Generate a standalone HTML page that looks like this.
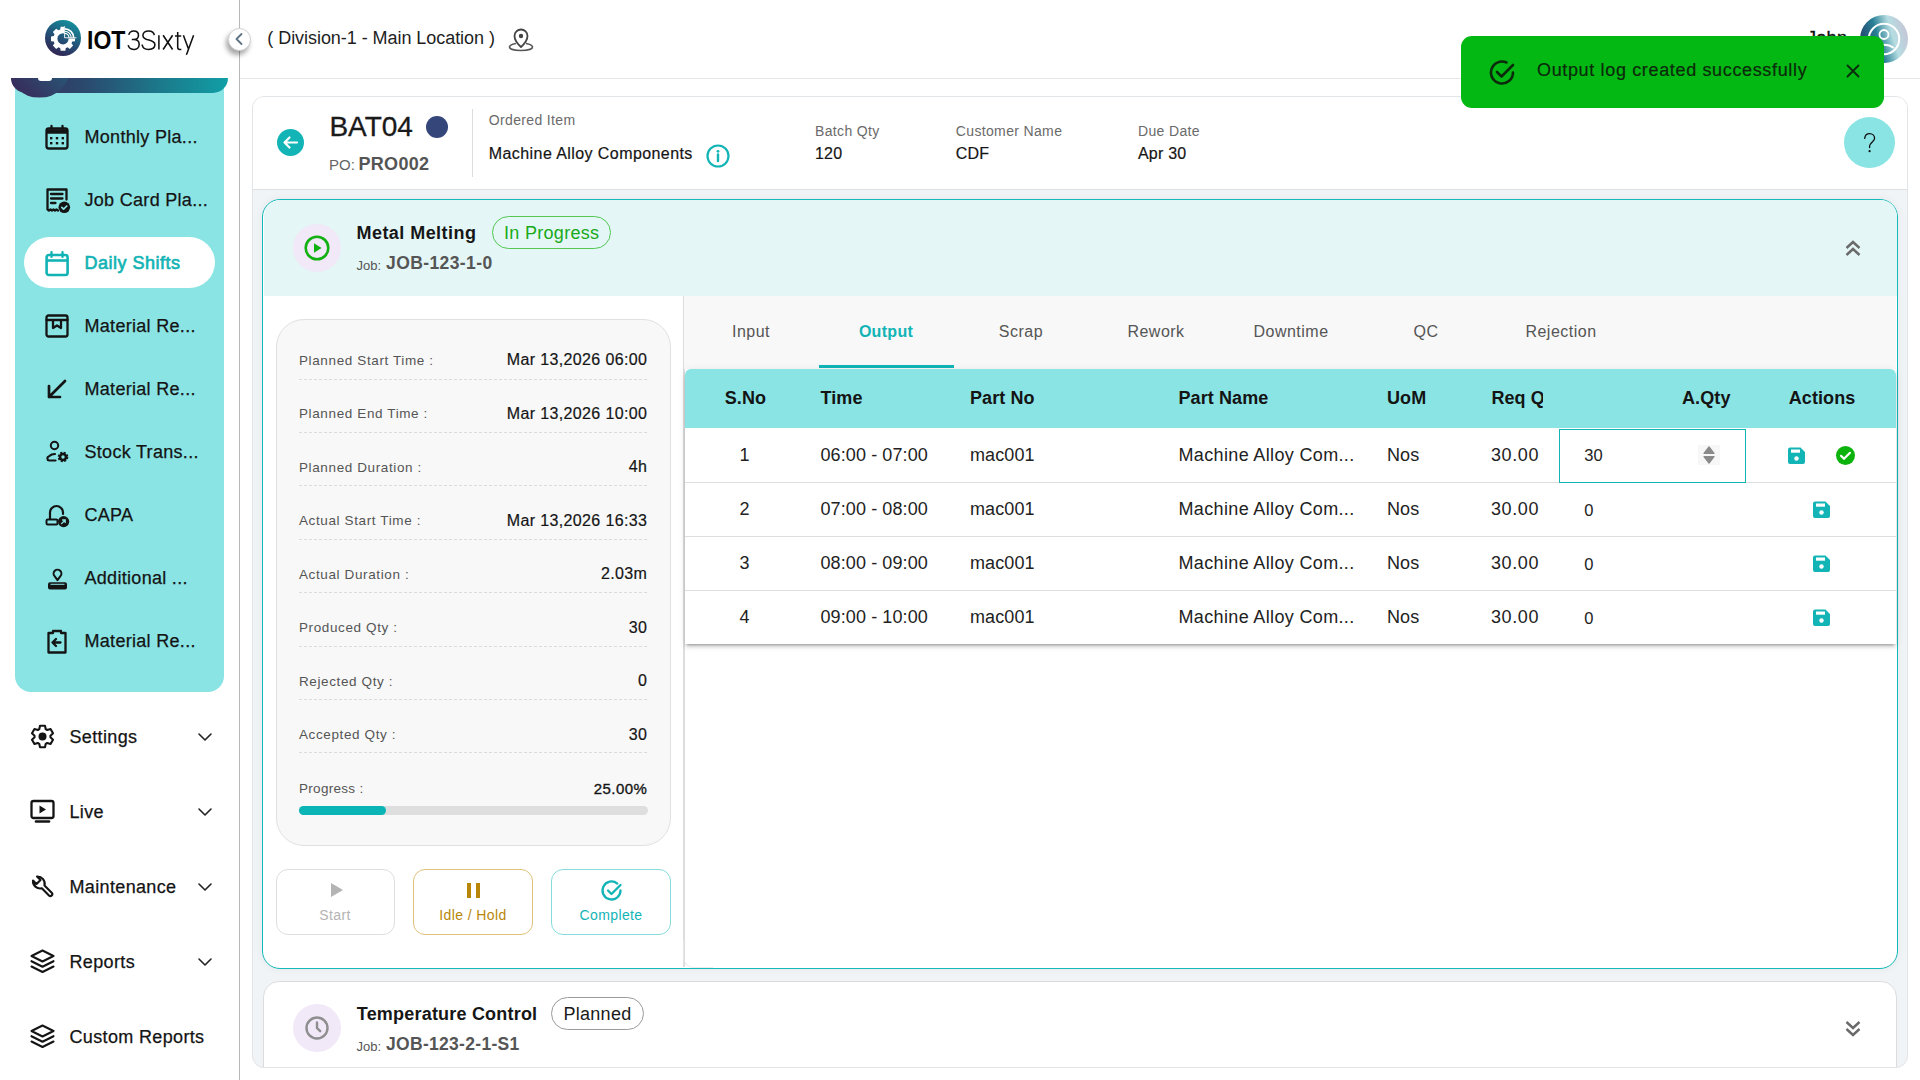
<!DOCTYPE html>
<html><head><meta charset="utf-8">
<style>
*{margin:0;padding:0;box-sizing:border-box}
html,body{width:1920px;height:1080px;overflow:hidden;background:#fff;font-family:"Liberation Sans",sans-serif;color:#111}
.a{position:absolute}
.t{position:absolute;line-height:1;white-space:nowrap}
svg{position:absolute;overflow:visible}
</style></head><body>
<div class="a" style="left:239px;top:0px;width:1px;height:1080px;background:#b8b8b8"></div>
<svg style="left:45px;top:20.2px" width="36" height="36" viewBox="0 0 36 36"><defs><linearGradient id="lg1" x1="0.25" y1="1" x2="0.75" y2="0"><stop offset="0" stop-color="#33204f"/><stop offset="0.5" stop-color="#22557a"/><stop offset="1" stop-color="#13959f"/></linearGradient>
<clipPath id="gq"><path d="M0 0H19V18.50H36V36H0Z"/></clipPath></defs>
<circle cx="18" cy="18" r="18" fill="url(#lg1)"/>
<path d="M26.90 22.40 L27.18 21.61 L29.98 21.13 L29.98 16.47 L27.18 15.99 L26.90 15.20 L26.84 15.05 L26.48 14.29 L28.11 11.98 L24.82 8.69 L22.51 10.32 L21.75 9.96 L21.60 9.90 L20.81 9.62 L20.33 6.82 L15.67 6.82 L15.19 9.62 L14.40 9.90 L14.25 9.96 L13.49 10.32 L11.18 8.69 L7.89 11.98 L9.52 14.29 L9.16 15.05 L9.10 15.20 L8.82 15.99 L6.02 16.47 L6.02 21.13 L8.82 21.61 L9.10 22.40 L9.16 22.55 L9.52 23.31 L7.89 25.62 L11.18 28.91 L13.49 27.28 L14.25 27.64 L14.40 27.70 L15.19 27.98 L15.67 30.78 L20.33 30.78 L20.81 27.98 L21.60 27.70 L21.75 27.64 L22.51 27.28 L24.82 28.91 L28.11 25.62 L26.48 23.31 L26.84 22.55 Z M23.60 18.80 A5.6 5.6 0 1 0 12.40 18.80 A5.6 5.6 0 1 0 23.60 18.80 Z" fill="#fff" fill-rule="evenodd" clip-path="url(#gq)"/>
<g fill="none" stroke="#fff">
<path d="M19.6 17.80V6.2M19.6 17.80H31.5" stroke-width="0.9"/>
<path d="M19.6 13.40A4.4 4.4 0 0 1 24 17.80" stroke-width="1.2"/>
<path d="M19.6 11.20A6.6 6.6 0 0 1 26.2 17.80" stroke-width="1.1"/>
<path d="M19.6 8.80A9 9 0 0 1 28.6 17.80" stroke-width="1.8"/>
</g></svg>
<div class="t" style="left:86.9px;top:27.49px;font-size:26px;font-weight:bold;color:#050505;transform:scaleX(0.885);transform-origin:0 0">IOT</div>
<svg style="left:0px;top:0px" width="200" height="60" viewBox="0 0 200 60"><g fill="none" stroke="#111" stroke-width="1.55" stroke-linecap="butt">
<path d="M128.8 34.8C129.4 32.2 131.3 30.9 133.7 30.9C136.7 30.9 138.5 32.7 138.5 35.2C138.5 37.7 136.6 39.5 133.6 39.5H131.8M133.6 39.5C137.1 39.5 139.2 41.5 139.2 44.4C139.2 47.5 136.8 49.4 133.6 49.4C130.7 49.4 128.7 47.9 128.2 45.2"/>
<path d="M154.3 35.2C153.9 32.5 151.6 30.9 148.6 30.9C145.3 30.9 142.9 32.7 142.9 35.4C142.9 41.6 154.9 38.6 154.9 44.6C154.9 47.6 152.3 49.4 148.7 49.4C144.9 49.4 142.4 47.5 142.1 44.5"/>
<path d="M158.9 35.3V49.5"/>
<path d="M163.1 35.3L172.6 49.5M172.6 35.3L163.1 49.5"/>
<path d="M177.7 32V47.3C177.7 48.9 178.4 49.4 179.6 49.4H181.3M175 35.9H181.2"/>
<path d="M183.4 35.3L188.6 49.2M193.6 35.3L188.2 50C187.5 52.3 187 53.8 186.3 54.7"/>
</g></svg>
<div class="a" style="left:15px;top:78px;width:209px;height:614px;background:#8ae4e4;border-radius:0 0 16px 16px"></div>
<div class="a" style="left:11px;top:78px;width:217px;height:15px;border-radius:0 0 22px 22px;background:linear-gradient(90deg,#3a2b5a 0%,#2a4a6e 35%,#1b7b8c 70%,#119fa6 100%)"></div>
<div class="a" style="left:9px;top:36.6px;width:61px;height:61px;border-radius:50%;clip-path:inset(41.4px 0 0 0);background:linear-gradient(45deg,#3b2355,#1f6f86)"></div>
<div class="a" style="left:38px;top:78px;width:14px;height:3px;background:#fff;border-radius:0 0 3px 3px"></div>
<div class="a" style="left:24px;top:237px;width:191px;height:51px;background:#fff;border-radius:26px"></div>
<svg style="left:45px;top:124.5px" width="24" height="25" viewBox="0 0 24 25"><rect x="1.5" y="3.5" width="21" height="20" rx="2.2" fill="none" stroke="#141414" stroke-width="2.3" stroke-linecap="round" stroke-linejoin="round"/><path d="M1.5 6.5h21" stroke="#141414" stroke-width="4.5"/><path d="M6.5 1v4M17.5 1v4" fill="none" stroke="#141414" stroke-width="2.3" stroke-linecap="round" stroke-linejoin="round"/><g fill="#141414"><rect x="5" y="12" width="2.4" height="2.4"/><rect x="10.8" y="12" width="2.4" height="2.4"/><rect x="16.6" y="12" width="2.4" height="2.4"/><rect x="5" y="17" width="2.4" height="2.4"/><rect x="10.8" y="17" width="2.4" height="2.4"/><rect x="16.6" y="17" width="2.4" height="2.4"/></g></svg>
<div class="t" style="left:84.50px;top:128.06px;font-size:18px;color:#141414;letter-spacing:0.3px;-webkit-text-stroke:0.25px #141414">Monthly Pla...</div>
<svg style="left:45px;top:187.5px" width="24" height="25" viewBox="0 0 24 25"><path d="M13 22.5l-1.5-1-1.5 1-1.5-1-1.5 1-1.5-1L4 22.5 2.5 21.5V1.5h19v10" fill="none" stroke="#141414" stroke-width="2.3" stroke-linecap="round" stroke-linejoin="round"/><path d="M6 6h11.5M6 10.5h11.5M6 15h4.5" fill="none" stroke="#141414" stroke-width="2.3" stroke-linecap="round" stroke-linejoin="round"/><circle cx="19.3" cy="19.3" r="5.8" fill="#141414"/><path d="M16.8 19.4l1.8 1.8 3.2-3.2" fill="none" stroke="#8ae4e4" stroke-width="1.7" stroke-linecap="round" stroke-linejoin="round"/></svg>
<div class="t" style="left:84.50px;top:191.06px;font-size:18px;color:#141414;letter-spacing:0.3px;-webkit-text-stroke:0.25px #141414">Job Card Pla...</div>
<svg style="left:45px;top:250.5px" width="24" height="25" viewBox="0 0 24 25"><rect x="1.6" y="4" width="21" height="20" rx="2.2" fill="none" stroke="#12b3b5" stroke-width="2.6"/><path d="M1.6 9.5h21" stroke="#12b3b5" stroke-width="2.6"/><path d="M6.5 1.2v4.5M17.5 1.2v4.5" fill="none" stroke="#12b3b5" stroke-width="2.4" stroke-linecap="round"/></svg>
<div class="t" style="left:84.50px;top:254.06px;font-size:18px;color:#12b3b5;letter-spacing:0.5px;-webkit-text-stroke:0.65px #12b3b5">Daily Shifts</div>
<svg style="left:45px;top:313.5px" width="24" height="25" viewBox="0 0 24 25"><rect x="1.5" y="1.5" width="21" height="21" rx="2" fill="none" stroke="#141414" stroke-width="2.3" stroke-linecap="round" stroke-linejoin="round"/><path d="M1.5 6h21M8 6v8l4-2.5 4 2.5V6" fill="none" stroke="#141414" stroke-width="2.3" stroke-linecap="round" stroke-linejoin="round"/></svg>
<div class="t" style="left:84.50px;top:317.06px;font-size:18px;color:#141414;letter-spacing:0.3px;-webkit-text-stroke:0.25px #141414">Material Re...</div>
<svg style="left:45px;top:376.5px" width="24" height="25" viewBox="0 0 24 25"><path d="M20 4L4 20M4 9v11h11" fill="none" stroke="#141414" stroke-width="2.7" stroke-linecap="round" stroke-linejoin="round"/></svg>
<div class="t" style="left:84.50px;top:380.06px;font-size:18px;color:#141414;letter-spacing:0.3px;-webkit-text-stroke:0.25px #141414">Material Re...</div>
<svg style="left:45px;top:439.5px" width="24" height="25" viewBox="0 0 24 25"><circle cx="9.5" cy="5.5" r="3.7" fill="none" stroke="#141414" stroke-width="2"/><path d="M10.5 20.5H4.2A2.2 2.2 0 0 1 4 16.2C5.5 14.8 7.5 14 10 14" fill="none" stroke="#141414" stroke-width="2.2" stroke-linecap="round"/><circle cx="18" cy="17" r="3" fill="none" stroke="#141414" stroke-width="2.6"/><circle cx="18" cy="17" r="4.3" fill="none" stroke="#141414" stroke-width="2" stroke-dasharray="2 1.4"/></svg>
<div class="t" style="left:84.50px;top:443.06px;font-size:18px;color:#141414;letter-spacing:0.3px;-webkit-text-stroke:0.25px #141414">Stock Trans...</div>
<svg style="left:45px;top:502.5px" width="24" height="25" viewBox="0 0 24 25"><path d="M5 16V9.5A6.5 6.5 0 0 1 18 9.5V11" fill="none" stroke="#141414" stroke-width="2.2" stroke-linecap="round"/><rect x="1.5" y="16.5" width="11" height="5" rx="1.2" fill="none" stroke="#141414" stroke-width="2"/><circle cx="18.6" cy="18.6" r="5.6" fill="#141414"/><path d="M16.6 20.6l3.6-3.6M17.6 17h2.6v2.6" fill="none" stroke="#8ae4e4" stroke-width="1.3" stroke-linecap="round"/></svg>
<div class="t" style="left:84.50px;top:506.06px;font-size:18px;color:#141414;letter-spacing:0.3px;-webkit-text-stroke:0.25px #141414">CAPA</div>
<svg style="left:45px;top:565.5px" width="24" height="25" viewBox="0 0 24 25"><path d="M12.5 14.2L9.6 10.2A3.9 3.9 0 1 1 15.4 10.2Z" fill="none" stroke="#141414" stroke-width="2" stroke-linejoin="round"/><rect x="3" y="16.2" width="19" height="7.3" rx="2" fill="#141414"/><path d="M5.5 18.3h14" stroke="#8ae4e4" stroke-width="1"/></svg>
<div class="t" style="left:84.50px;top:569.06px;font-size:18px;color:#141414;letter-spacing:0.3px;-webkit-text-stroke:0.25px #141414">Additional ...</div>
<svg style="left:45px;top:628.5px" width="24" height="25" viewBox="0 0 24 25"><path d="M8 4H3.5v19.5h17V4H16M8 4V2h8v2" fill="none" stroke="#141414" stroke-width="2.3" stroke-linecap="round" stroke-linejoin="round"/><path d="M15.5 13.5h-8M11 10l-3.5 3.5L11 17" fill="none" stroke="#141414" stroke-width="2.3" stroke-linecap="round" stroke-linejoin="round"/></svg>
<div class="t" style="left:84.50px;top:632.06px;font-size:18px;color:#141414;letter-spacing:0.3px;-webkit-text-stroke:0.25px #141414">Material Re...</div>
<svg style="left:29.5px;top:724.2px" width="25" height="25" viewBox="0 0 25 25"><path d="M9.25 5.19 L10.03 1.78 L14.97 1.78 L15.75 5.19 L17.20 6.03 L20.54 5.00 L23.02 9.28 L20.46 11.66 L20.46 13.34 L23.02 15.72 L20.54 20.00 L17.20 18.97 L15.75 19.81 L14.97 23.22 L10.03 23.22 L9.25 19.81 L7.80 18.97 L4.46 20.00 L1.98 15.72 L4.54 13.34 L4.54 11.66 L1.98 9.28 L4.46 5.00 L7.80 6.03Z" fill="none" stroke="#141414" stroke-width="2.1" stroke-linejoin="round"/><circle cx="12.5" cy="12.5" r="4" fill="#141414"/></svg>
<div class="t" style="left:69.50px;top:727.56px;font-size:18px;color:#141414;letter-spacing:0.35px;-webkit-text-stroke:0.25px #141414">Settings</div>
<svg style="left:198px;top:732.7px" width="14" height="8" viewBox="0 0 14 8"><path d="M1 1l6 6 6-6" fill="none" stroke="#222" stroke-width="1.6" stroke-linecap="round" stroke-linejoin="round"/></svg>
<svg style="left:29.5px;top:799.2px" width="25" height="25" viewBox="0 0 25 25"><rect x="1.5" y="2" width="22" height="17" rx="2" fill="none" stroke="#141414" stroke-width="2.3"/><path d="M9.5 6.5v8l6.5-4z" fill="#141414"/><path d="M6 22.5h13" stroke="#141414" stroke-width="2.6" stroke-linecap="round"/></svg>
<div class="t" style="left:69.50px;top:802.56px;font-size:18px;color:#141414;letter-spacing:0.35px;-webkit-text-stroke:0.25px #141414">Live</div>
<svg style="left:198px;top:807.7px" width="14" height="8" viewBox="0 0 14 8"><path d="M1 1l6 6 6-6" fill="none" stroke="#222" stroke-width="1.6" stroke-linecap="round" stroke-linejoin="round"/></svg>
<svg style="left:29.5px;top:874.2px" width="25" height="25" viewBox="0 0 25 25"><path d="M7 2.5L10.5 6 6.5 10 3 6.5A7.3 7.3 0 0 0 11.8 14.3L19 21.5A1.9 1.9 0 0 0 21.7 18.8L14.5 11.6A7.3 7.3 0 0 0 7 2.5Z" fill="none" stroke="#141414" stroke-width="2.1" stroke-linejoin="round"/></svg>
<div class="t" style="left:69.50px;top:877.56px;font-size:18px;color:#141414;letter-spacing:0.35px;-webkit-text-stroke:0.25px #141414">Maintenance</div>
<svg style="left:198px;top:882.7px" width="14" height="8" viewBox="0 0 14 8"><path d="M1 1l6 6 6-6" fill="none" stroke="#222" stroke-width="1.6" stroke-linecap="round" stroke-linejoin="round"/></svg>
<svg style="left:29.5px;top:949.2px" width="25" height="25" viewBox="0 0 25 25"><path d="M12.5 1.5l11 5.5-11 5.5-11-5.5z" fill="none" stroke="#141414" stroke-width="2.1" stroke-linecap="round" stroke-linejoin="round"/><path d="M1.5 12.2l11 5.5 11-5.5M1.5 17.5l11 5.5 11-5.5" fill="none" stroke="#141414" stroke-width="2.1" stroke-linecap="round" stroke-linejoin="round"/></svg>
<div class="t" style="left:69.50px;top:952.56px;font-size:18px;color:#141414;letter-spacing:0.35px;-webkit-text-stroke:0.25px #141414">Reports</div>
<svg style="left:198px;top:957.7px" width="14" height="8" viewBox="0 0 14 8"><path d="M1 1l6 6 6-6" fill="none" stroke="#222" stroke-width="1.6" stroke-linecap="round" stroke-linejoin="round"/></svg>
<svg style="left:29.5px;top:1024.2px" width="25" height="25" viewBox="0 0 25 25"><path d="M12.5 1.5l11 5.5-11 5.5-11-5.5z" fill="none" stroke="#141414" stroke-width="2.1" stroke-linecap="round" stroke-linejoin="round"/><path d="M1.5 12.2l11 5.5 11-5.5M1.5 17.5l11 5.5 11-5.5" fill="none" stroke="#141414" stroke-width="2.1" stroke-linecap="round" stroke-linejoin="round"/></svg>
<div class="t" style="left:69.50px;top:1027.56px;font-size:18px;color:#141414;letter-spacing:0.35px;-webkit-text-stroke:0.25px #141414">Custom Reports</div>
<div class="a" style="left:240px;top:78px;width:1680px;height:1px;background:#e6e6e6"></div>
<div class="a" style="left:227.5px;top:27.5px;width:23px;height:23px;border-radius:50%;background:#fff;border:1px solid #d0d0d0;box-shadow:-2px 4px 5px rgba(0,0,0,.35)"></div>
<svg style="left:234px;top:32px" width="10" height="14" viewBox="0 0 10 14"><path d="M7.5 2L2.5 7l5 5" fill="none" stroke="#5e7384" stroke-width="1.8" stroke-linecap="round" stroke-linejoin="round"/></svg>
<div class="t" id="loc" style="left:267.30px;top:28.66px;font-size:18px;color:#1e1e1e;letter-spacing:-0.05px">( Division-1 - Main Location )</div>
<svg style="left:508px;top:26px" width="26" height="26" viewBox="0 0 26 26"><path d="M13 21s-6.5-6-6.5-11a6.5 6.5 0 0 1 13 0c0 5-6.5 11-6.5 11z" fill="none" stroke="#444" stroke-width="1.8" stroke-linejoin="round"/><circle cx="13" cy="10" r="2.2" fill="#444"/><path d="M8 17.5C4 18.3 1.5 19.6 1.5 21c0 2 5.1 3.5 11.5 3.5s11.5-1.5 11.5-3.5c0-1.4-2.5-2.7-6.5-3.5" fill="none" stroke="#555" stroke-width="1.6"/></svg>
<div class="t" style="left:1807.00px;top:29.06px;font-size:18px;color:#111;-webkit-text-stroke:0.4px #111;letter-spacing:0.3px">John</div>
<svg style="left:1860px;top:15px" width="48" height="48" viewBox="0 0 48 48"><defs><linearGradient id="av" x1="0" y1="0.7" x2="1" y2="0.4"><stop offset="0" stop-color="#243a66"/><stop offset="0.4" stop-color="#287f95"/><stop offset="0.7" stop-color="#b6dde2"/><stop offset="1" stop-color="#c5c6d6"/></linearGradient></defs>
<circle cx="24" cy="24" r="24" fill="url(#av)"/><circle cx="24" cy="24" r="15.2" fill="none" stroke="#fff" stroke-width="2"/><circle cx="24" cy="19.5" r="4.5" fill="none" stroke="#fff" stroke-width="1.8"/><path d="M14 33c3-2.2 6.3-3.3 10-3.3s7 1.1 10 3.3" fill="none" stroke="#fff" stroke-width="2"/></svg>
<div class="a" style="left:252px;top:96px;width:1656px;height:972px;background:#f0f4f6;border:1px solid #e2e5e8;border-radius:12px"></div>
<div class="a" style="left:253px;top:97px;width:1654px;height:93px;background:#fff;border-radius:11px 11px 0 0"></div>
<div class="a" style="left:253px;top:189px;width:1654px;height:1px;background:#e0e0e0"></div>
<svg style="left:277px;top:129px" width="27" height="27" viewBox="0 0 27 27"><circle cx="13.5" cy="13.5" r="13.5" fill="#12b4b6"/><path d="M20 13.5H7.5M12.5 8.5l-5 5 5 5" fill="none" stroke="#fff" stroke-width="2.2" stroke-linecap="round" stroke-linejoin="round"/></svg>
<div class="t" id="bat" style="left:329.40px;top:113.30px;font-size:28px;color:#1a1a1a;-webkit-text-stroke:0.3px #1a1a1a">BAT04</div>
<div class="a" style="left:426px;top:116px;width:22px;height:22px;background:#34467a;border-radius:50%"></div>
<div class="a" style="left:472px;top:109px;width:1px;height:68px;background:#dcdcdc"></div>
<div class="t" id="po" style="left:329.00px;top:157.10px;font-size:15px;color:#666">PO:</div>
<div class="t" id="pro" style="left:358.50px;top:154.56px;font-size:18px;color:#555;font-weight:bold;letter-spacing:0.3px">PRO002</div>
<div class="t" id="oi" style="left:488.80px;top:113.15px;font-size:14px;color:#6a6a6a;letter-spacing:0.35px">Ordered Item</div>
<div class="t" id="mac" style="left:488.80px;top:146.26px;font-size:16px;color:#151515;letter-spacing:0.42px;-webkit-text-stroke:0.2px #151515">Machine Alloy Components</div>
<svg style="left:706px;top:144px" width="24" height="24" viewBox="0 0 24 24"><circle cx="12" cy="12" r="10.5" fill="none" stroke="#12b4b6" stroke-width="2.2"/><circle cx="12" cy="7.3" r="1.4" fill="#12b4b6"/><path d="M12 10.5v6.5" stroke="#12b4b6" stroke-width="2.4" stroke-linecap="round"/></svg>
<div class="t" style="left:815.00px;top:123.75px;font-size:14px;color:#6a6a6a;letter-spacing:0.35px">Batch Qty</div>
<div class="t" style="left:815.00px;top:146.36px;font-size:16px;color:#151515;letter-spacing:0.2px;-webkit-text-stroke:0.2px #151515">120</div>
<div class="t" style="left:955.80px;top:123.75px;font-size:14px;color:#6a6a6a;letter-spacing:0.35px">Customer Name</div>
<div class="t" style="left:955.80px;top:146.36px;font-size:16px;color:#151515;letter-spacing:0.2px;-webkit-text-stroke:0.2px #151515">CDF</div>
<div class="t" style="left:1138.00px;top:123.75px;font-size:14px;color:#6a6a6a;letter-spacing:0.35px">Due Date</div>
<div class="t" style="left:1138.00px;top:146.36px;font-size:16px;color:#151515;letter-spacing:0.2px;-webkit-text-stroke:0.2px #151515">Apr 30</div>
<div class="a" style="left:1844px;top:117px;width:51px;height:51px;background:#8ae4e4;border-radius:50%"></div>
<svg style="left:0px;top:0px" width="1920" height="200" viewBox="0 0 1920 200"><path d="M1864.7 138.4C1865 135.5 1867 133.6 1869.6 133.6C1872.4 133.6 1874.6 135.6 1874.6 138.3C1874.6 141.5 1869.6 142.5 1869.6 146.3V147.5" fill="none" stroke="#111" stroke-width="1.35" stroke-linecap="round"/><circle cx="1869.6" cy="151.2" r="1.1" fill="#111"/></svg>
<div class="a" style="left:262px;top:198.5px;width:1636px;height:770.0px;background:#fff;border:1.5px solid #14b8b9;border-radius:18px;box-shadow:0 0 10px rgba(0,0,0,.05)"></div>
<div class="a" style="left:263.5px;top:200px;width:1633.0px;height:96px;background:#e4f6f6;border-radius:16.5px 16.5px 0 0"></div>
<div class="a" style="left:293px;top:223.7px;width:48px;height:48.0px;background:#f1e8f8;border-radius:50%"></div>
<svg style="left:304px;top:235px" width="26" height="26" viewBox="0 0 26 26"><circle cx="13" cy="13" r="11.3" fill="none" stroke="#11b111" stroke-width="2.6"/><path d="M10 8.2v9.6l7.6-4.8z" fill="#11b111"/></svg>
<div class="t" id="mm" style="left:356.50px;top:223.86px;font-size:18px;color:#161616;font-weight:bold;letter-spacing:0.45px">Metal Melting</div>
<div class="a" style="left:492px;top:216px;width:119px;height:33px;border:1px solid #52c752;border-radius:17px"></div>
<div class="t" id="inp" style="left:504.00px;top:223.86px;font-size:18px;color:#19aa19;letter-spacing:0.3px">In Progress</div>
<div class="t" id="job" style="left:356.50px;top:258.70px;font-size:13px;color:#555">Job:</div>
<div class="t" id="jobid" style="left:386.00px;top:254.89px;font-size:17.5px;color:#555;font-weight:bold;letter-spacing:0.4px">JOB-123-1-0</div>
<svg style="left:1845px;top:240px" width="16" height="17" viewBox="0 0 16 17"><path d="M1.5 8l6.5-6 6.5 6M1.5 15l6.5-6 6.5 6" fill="none" stroke="#6a6a6a" stroke-width="2.4"/></svg>
<div class="a" style="left:275.5px;top:318.5px;width:395.0px;height:527.0px;background:#f8f8f8;border:1px solid #e0e0e0;border-radius:28px"></div>
<div class="t" style="left:299.00px;top:353.57px;font-size:13.5px;color:#555;letter-spacing:0.62px">Planned Start Time :</div>
<div class="t" style="right:1272.70px;top:352.16px;font-size:16px;color:#151515;letter-spacing:0.37px;-webkit-text-stroke:0.2px #151515">Mar 13,2026 06:00</div>
<div class="a" style="left:299px;top:378.5px;width:349px;height:1px;background-image:linear-gradient(90deg,#dcdcdc 60%,transparent 60%);background-size:5px 1px"></div>
<div class="t" style="left:299.00px;top:407.07px;font-size:13.5px;color:#555;letter-spacing:0.62px">Planned End Time :</div>
<div class="t" style="right:1272.70px;top:405.66px;font-size:16px;color:#151515;letter-spacing:0.37px;-webkit-text-stroke:0.2px #151515">Mar 13,2026 10:00</div>
<div class="a" style="left:299px;top:431.9px;width:349px;height:1px;background-image:linear-gradient(90deg,#dcdcdc 60%,transparent 60%);background-size:5px 1px"></div>
<div class="t" style="left:299.00px;top:460.57px;font-size:13.5px;color:#555;letter-spacing:0.62px">Planned Duration :</div>
<div class="t" style="right:1272.70px;top:459.16px;font-size:16px;color:#151515;letter-spacing:0.37px;-webkit-text-stroke:0.2px #151515">4h</div>
<div class="a" style="left:299px;top:485.3px;width:349px;height:1px;background-image:linear-gradient(90deg,#dcdcdc 60%,transparent 60%);background-size:5px 1px"></div>
<div class="t" style="left:299.00px;top:514.07px;font-size:13.5px;color:#555;letter-spacing:0.62px">Actual Start Time :</div>
<div class="t" style="right:1272.70px;top:512.66px;font-size:16px;color:#151515;letter-spacing:0.37px;-webkit-text-stroke:0.2px #151515">Mar 13,2026 16:33</div>
<div class="a" style="left:299px;top:538.7px;width:349px;height:1px;background-image:linear-gradient(90deg,#dcdcdc 60%,transparent 60%);background-size:5px 1px"></div>
<div class="t" style="left:299.00px;top:567.57px;font-size:13.5px;color:#555;letter-spacing:0.62px">Actual Duration :</div>
<div class="t" style="right:1272.70px;top:566.16px;font-size:16px;color:#151515;letter-spacing:0.37px;-webkit-text-stroke:0.2px #151515">2.03m</div>
<div class="a" style="left:299px;top:592.1px;width:349px;height:1px;background-image:linear-gradient(90deg,#dcdcdc 60%,transparent 60%);background-size:5px 1px"></div>
<div class="t" style="left:299.00px;top:621.07px;font-size:13.5px;color:#555;letter-spacing:0.62px">Produced Qty :</div>
<div class="t" style="right:1272.70px;top:619.66px;font-size:16px;color:#151515;letter-spacing:0.37px;-webkit-text-stroke:0.2px #151515">30</div>
<div class="a" style="left:299px;top:645.5px;width:349px;height:1px;background-image:linear-gradient(90deg,#dcdcdc 60%,transparent 60%);background-size:5px 1px"></div>
<div class="t" style="left:299.00px;top:674.57px;font-size:13.5px;color:#555;letter-spacing:0.62px">Rejected Qty :</div>
<div class="t" style="right:1272.70px;top:673.16px;font-size:16px;color:#151515;letter-spacing:0.37px;-webkit-text-stroke:0.2px #151515">0</div>
<div class="a" style="left:299px;top:698.9px;width:349px;height:1px;background-image:linear-gradient(90deg,#dcdcdc 60%,transparent 60%);background-size:5px 1px"></div>
<div class="t" style="left:299.00px;top:728.07px;font-size:13.5px;color:#555;letter-spacing:0.62px">Accepted Qty :</div>
<div class="t" style="right:1272.70px;top:726.66px;font-size:16px;color:#151515;letter-spacing:0.37px;-webkit-text-stroke:0.2px #151515">30</div>
<div class="a" style="left:299px;top:752.3px;width:349px;height:1px;background-image:linear-gradient(90deg,#dcdcdc 60%,transparent 60%);background-size:5px 1px"></div>
<div class="t" style="left:299.00px;top:781.57px;font-size:13.5px;color:#555;letter-spacing:0.3px">Progress :</div>
<div class="t" style="right:1272.70px;top:780.60px;font-size:15px;color:#151515;letter-spacing:0.45px;-webkit-text-stroke:0.35px #151515">25.00%</div>
<div class="a" style="left:299px;top:806px;width:349px;height:9px;background:#dedede;border-radius:5px"></div>
<div class="a" style="left:299px;top:806px;width:87px;height:9px;background:#0bb5b6;border-radius:5px"></div>
<div class="a" style="left:275.5px;top:868.5px;width:119.0px;height:66.0px;border:1px solid #dedede;border-radius:12px;background:#fff"></div>
<svg style="left:330px;top:882px" width="14" height="16" viewBox="0 0 14 16"><path d="M1 1v14l12-7z" fill="#b4b4b4"/></svg>
<div class="t" style="left:135.00px;width:400px;text-align:center;top:908.45px;font-size:14px;color:#b4b4b4;letter-spacing:0.4px">Start</div>
<div class="a" style="left:413px;top:868.5px;width:119.5px;height:66.0px;border:1px solid #dfc27a;border-radius:12px;background:#fff"></div>
<div class="a" style="left:466.7px;top:882.7px;width:4.800000000000011px;height:15.299999999999955px;background:#b8870a"></div>
<div class="a" style="left:475.7px;top:882.7px;width:4.800000000000011px;height:15.299999999999955px;background:#b8870a"></div>
<div class="t" style="left:273.00px;width:400px;text-align:center;top:908.45px;font-size:14px;color:#b8870a;letter-spacing:0.4px">Idle / Hold</div>
<div class="a" style="left:551px;top:868.5px;width:119.5px;height:66.0px;border:1px solid #86dbdc;border-radius:12px;background:#fff"></div>
<svg style="left:599.5px;top:878.5px" width="24" height="24" viewBox="0 0 24 24"><path d="M20.5 11.5a9 9 0 1 1-3.2-6.9" fill="none" stroke="#12b4b6" stroke-width="2.3" stroke-linecap="round"/><path d="M8 11.5l3.5 3.5 9-9" fill="none" stroke="#12b4b6" stroke-width="2.3" stroke-linecap="round" stroke-linejoin="round"/></svg>
<div class="t" style="left:411.00px;width:400px;text-align:center;top:908.45px;font-size:14px;color:#12b4b6;letter-spacing:0.4px">Complete</div>
<div class="a" style="left:683px;top:296px;width:1.5px;height:671px;background:#dddddd"></div>
<div class="a" style="left:683px;top:940px;width:30px;height:27.5px;border-left:1.5px solid #e6e6e6;border-bottom:1px solid #ededed;border-radius:0 0 0 10px;border-top:0;border-right:0"></div>
<div class="a" style="left:684px;top:296px;width:1212px;height:73px;background:#f8f8f8"></div>
<div class="t" style="left:551.00px;width:400px;text-align:center;top:324.46px;font-size:16px;color:#555;letter-spacing:0.5px">Input</div>
<div class="t" style="left:686.00px;width:400px;text-align:center;top:324.46px;font-size:16px;color:#12b4b6;font-weight:bold;letter-spacing:0.3px">Output</div>
<div class="t" style="left:821.00px;width:400px;text-align:center;top:324.46px;font-size:16px;color:#555;letter-spacing:0.5px">Scrap</div>
<div class="t" style="left:956.00px;width:400px;text-align:center;top:324.46px;font-size:16px;color:#555;letter-spacing:0.5px">Rework</div>
<div class="t" style="left:1091.00px;width:400px;text-align:center;top:324.46px;font-size:16px;color:#555;letter-spacing:0.5px">Downtime</div>
<div class="t" style="left:1226.00px;width:400px;text-align:center;top:324.46px;font-size:16px;color:#555;letter-spacing:0.5px">QC</div>
<div class="t" style="left:1361.00px;width:400px;text-align:center;top:324.46px;font-size:16px;color:#555;letter-spacing:0.5px">Rejection</div>
<div class="a" style="left:819px;top:365px;width:135px;height:3px;background:#12b4b6"></div>
<div class="a" style="left:685px;top:369px;width:1211px;height:275px;background:#fff;box-shadow:0 3px 3px -2px rgba(0,0,0,.3),0 3px 4px 0 rgba(0,0,0,.12),0 1px 8px 0 rgba(0,0,0,.08);border-radius:6px 6px 0 0"></div>
<div class="a" style="left:685px;top:369px;width:1211px;height:59px;background:#8ae4e4;border-radius:6px 6px 0 0"></div>
<div class="t" style="left:724.70px;top:388.96px;font-size:18px;color:#141414;font-weight:bold;letter-spacing:0.1px">S.No</div>
<div class="t" style="left:820.50px;top:388.96px;font-size:18px;color:#141414;font-weight:bold;letter-spacing:0.1px">Time</div>
<div class="t" style="left:970.00px;top:388.96px;font-size:18px;color:#141414;font-weight:bold;letter-spacing:0.1px">Part No</div>
<div class="t" style="left:1178.50px;top:388.96px;font-size:18px;color:#141414;font-weight:bold;letter-spacing:0.1px">Part Name</div>
<div class="t" style="left:1387.00px;top:388.96px;font-size:18px;color:#141414;font-weight:bold;letter-spacing:0.1px">UoM</div>
<div class="a" style="left:1491.4px;top:385px;width:52px;height:30px;overflow:hidden"><div class="t" style="left:0.00px;top:3.96px;font-size:18px;color:#141414;font-weight:bold;letter-spacing:0.1px">Req Qty</div></div>
<div class="t" style="left:1682.00px;top:388.96px;font-size:18px;color:#141414;font-weight:bold;letter-spacing:0.1px">A.Qty</div>
<div class="t" style="left:1788.70px;top:388.96px;font-size:18px;color:#141414;font-weight:bold;letter-spacing:0.1px">Actions</div>
<div class="a" style="left:685px;top:482px;width:1211px;height:1px;background:#dedede"></div>
<div class="t" style="left:544.50px;width:400px;text-align:center;top:446.26px;font-size:18px;color:#222;letter-spacing:0.1px">1</div>
<div class="t" style="left:820.50px;top:446.26px;font-size:18px;color:#222;letter-spacing:0.1px">06:00 - 07:00</div>
<div class="t" style="left:970.00px;top:446.26px;font-size:18px;color:#222;letter-spacing:0.1px">mac001</div>
<div class="t" style="left:1178.50px;top:446.26px;font-size:18px;color:#222;letter-spacing:0.35px">Machine Alloy Com...</div>
<div class="t" style="left:1387.00px;top:446.26px;font-size:18px;color:#222;letter-spacing:0.1px">Nos</div>
<div class="t" style="left:1491.00px;top:446.26px;font-size:18px;color:#222;letter-spacing:0.6px">30.00</div>
<div class="a" style="left:1559px;top:429px;width:187px;height:54px;border:1.5px solid #12b4b6;background:#fff"></div>
<div class="t" style="left:1584.30px;top:447.33px;font-size:16.5px;color:#222">30</div>
<div class="a" style="left:1698px;top:445px;width:22px;height:20px;background:#f7f7f7"></div>
<svg style="left:1703px;top:446px" width="12" height="18" viewBox="0 0 12 18"><path d="M6 1L11 7.3H1z" fill="#8a8a8a" stroke="#8a8a8a" stroke-width="1.3" stroke-linejoin="round"/><path d="M1 10.7h10L6 17z" fill="#8a8a8a" stroke="#8a8a8a" stroke-width="1.3" stroke-linejoin="round"/></svg>
<svg style="left:1787.5px;top:447px" width="17" height="17.5" viewBox="0 0 17 17.5"><path d="M2 0.5h10.5L17 5v10a2 2 0 0 1-2 2H2a2 2 0 0 1-2-2V2.5a2 2 0 0 1 2-2z" fill="#12b4b6"/><rect x="3" y="2.5" width="9" height="3.2" fill="#fff"/><circle cx="8.5" cy="11.5" r="2.2" fill="#fff"/></svg>
<svg style="left:1835.5px;top:445.5px" width="19" height="19" viewBox="0 0 19 19"><circle cx="9.5" cy="9.5" r="9.5" fill="#0cb30c"/><path d="M5 9.8l3 3 6-6" fill="none" stroke="#fff" stroke-width="2.2" stroke-linecap="round" stroke-linejoin="round"/></svg>
<div class="a" style="left:685px;top:536px;width:1211px;height:1px;background:#dedede"></div>
<div class="t" style="left:544.50px;width:400px;text-align:center;top:500.26px;font-size:18px;color:#222;letter-spacing:0.1px">2</div>
<div class="t" style="left:820.50px;top:500.26px;font-size:18px;color:#222;letter-spacing:0.1px">07:00 - 08:00</div>
<div class="t" style="left:970.00px;top:500.26px;font-size:18px;color:#222;letter-spacing:0.1px">mac001</div>
<div class="t" style="left:1178.50px;top:500.26px;font-size:18px;color:#222;letter-spacing:0.35px">Machine Alloy Com...</div>
<div class="t" style="left:1387.00px;top:500.26px;font-size:18px;color:#222;letter-spacing:0.1px">Nos</div>
<div class="t" style="left:1491.00px;top:500.26px;font-size:18px;color:#222;letter-spacing:0.6px">30.00</div>
<div class="t" style="left:1584.30px;top:501.53px;font-size:16.5px;color:#222">0</div>
<svg style="left:1812.5px;top:500.8px" width="17" height="17.5" viewBox="0 0 17 17.5"><path d="M2 0.5h10.5L17 5v10a2 2 0 0 1-2 2H2a2 2 0 0 1-2-2V2.5a2 2 0 0 1 2-2z" fill="#12b4b6"/><rect x="3" y="2.5" width="9" height="3.2" fill="#fff"/><circle cx="8.5" cy="11.5" r="2.2" fill="#fff"/></svg>
<div class="a" style="left:685px;top:590px;width:1211px;height:1px;background:#dedede"></div>
<div class="t" style="left:544.50px;width:400px;text-align:center;top:554.26px;font-size:18px;color:#222;letter-spacing:0.1px">3</div>
<div class="t" style="left:820.50px;top:554.26px;font-size:18px;color:#222;letter-spacing:0.1px">08:00 - 09:00</div>
<div class="t" style="left:970.00px;top:554.26px;font-size:18px;color:#222;letter-spacing:0.1px">mac001</div>
<div class="t" style="left:1178.50px;top:554.26px;font-size:18px;color:#222;letter-spacing:0.35px">Machine Alloy Com...</div>
<div class="t" style="left:1387.00px;top:554.26px;font-size:18px;color:#222;letter-spacing:0.1px">Nos</div>
<div class="t" style="left:1491.00px;top:554.26px;font-size:18px;color:#222;letter-spacing:0.6px">30.00</div>
<div class="t" style="left:1584.30px;top:555.53px;font-size:16.5px;color:#222">0</div>
<svg style="left:1812.5px;top:554.8px" width="17" height="17.5" viewBox="0 0 17 17.5"><path d="M2 0.5h10.5L17 5v10a2 2 0 0 1-2 2H2a2 2 0 0 1-2-2V2.5a2 2 0 0 1 2-2z" fill="#12b4b6"/><rect x="3" y="2.5" width="9" height="3.2" fill="#fff"/><circle cx="8.5" cy="11.5" r="2.2" fill="#fff"/></svg>
<div class="t" style="left:544.50px;width:400px;text-align:center;top:608.26px;font-size:18px;color:#222;letter-spacing:0.1px">4</div>
<div class="t" style="left:820.50px;top:608.26px;font-size:18px;color:#222;letter-spacing:0.1px">09:00 - 10:00</div>
<div class="t" style="left:970.00px;top:608.26px;font-size:18px;color:#222;letter-spacing:0.1px">mac001</div>
<div class="t" style="left:1178.50px;top:608.26px;font-size:18px;color:#222;letter-spacing:0.35px">Machine Alloy Com...</div>
<div class="t" style="left:1387.00px;top:608.26px;font-size:18px;color:#222;letter-spacing:0.1px">Nos</div>
<div class="t" style="left:1491.00px;top:608.26px;font-size:18px;color:#222;letter-spacing:0.6px">30.00</div>
<div class="t" style="left:1584.30px;top:609.53px;font-size:16.5px;color:#222">0</div>
<svg style="left:1812.5px;top:608.8px" width="17" height="17.5" viewBox="0 0 17 17.5"><path d="M2 0.5h10.5L17 5v10a2 2 0 0 1-2 2H2a2 2 0 0 1-2-2V2.5a2 2 0 0 1 2-2z" fill="#12b4b6"/><rect x="3" y="2.5" width="9" height="3.2" fill="#fff"/><circle cx="8.5" cy="11.5" r="2.2" fill="#fff"/></svg>
<div class="a" style="left:253px;top:970px;width:1653px;height:97px;overflow:hidden;border-radius:0 0 11px 11px"><div class="a" style="left:10px;top:11px;width:1634px;height:120px;background:#fff;border:1px solid #dcdcdc;border-radius:16px"></div></div>
<div class="a" style="left:293px;top:1003.8px;width:48px;height:48.0px;background:#f1e8f8;border-radius:50%"></div>
<svg style="left:305px;top:1016px" width="24" height="24" viewBox="0 0 24 24"><circle cx="12" cy="12" r="10.5" fill="none" stroke="#8e8e8e" stroke-width="2.4"/><path d="M12 6.5v5.5l3.2 3.2" fill="none" stroke="#8e8e8e" stroke-width="2.4" stroke-linecap="round"/></svg>
<div class="t" id="tc" style="left:356.80px;top:1004.86px;font-size:18px;color:#161616;font-weight:bold;letter-spacing:0.2px">Temperature Control</div>
<div class="a" style="left:551px;top:997px;width:93px;height:33px;border:1px solid #9a9a9a;border-radius:17px"></div>
<div class="t" id="pl" style="left:563.40px;top:1004.86px;font-size:18px;color:#1a1a1a;letter-spacing:0.3px">Planned</div>
<div class="t" style="left:356.50px;top:1039.60px;font-size:13px;color:#555">Job:</div>
<div class="t" id="jobid2" style="left:386.00px;top:1035.79px;font-size:17.5px;color:#555;font-weight:bold;letter-spacing:0.3px">JOB-123-2-1-S1</div>
<svg style="left:1845px;top:1020px" width="16" height="17" viewBox="0 0 16 17"><path d="M1.5 2l6.5 6 6.5-6M1.5 9l6.5 6 6.5-6" fill="none" stroke="#6a6a6a" stroke-width="2.4"/></svg>
<div class="a" style="left:1461px;top:36px;width:423px;height:71.5px;background:#03b813;border-radius:11px"></div>
<svg style="left:1487.5px;top:58.5px" width="29" height="29" viewBox="0 0 29 29"><path d="M25 13.5A11 11 0 1 1 18.5 3.5" fill="none" stroke="#0c2a0c" stroke-width="2.6" stroke-linecap="round"/><path d="M9 13l4.5 4.5L25 6" fill="none" stroke="#0c2a0c" stroke-width="2.6" stroke-linecap="round" stroke-linejoin="round"/></svg>
<div class="t" id="toast" style="left:1537.00px;top:60.76px;font-size:18px;color:#0c2a0c;letter-spacing:0.65px;-webkit-text-stroke:0.2px #0c2a0c">Output log created successfully</div>
<svg style="left:1846px;top:63.5px" width="14" height="14" viewBox="0 0 14 14"><path d="M1.5 1.5l11 11M12.5 1.5l-11 11" stroke="#0c2a0c" stroke-width="1.8" stroke-linecap="round"/></svg>
</body></html>
